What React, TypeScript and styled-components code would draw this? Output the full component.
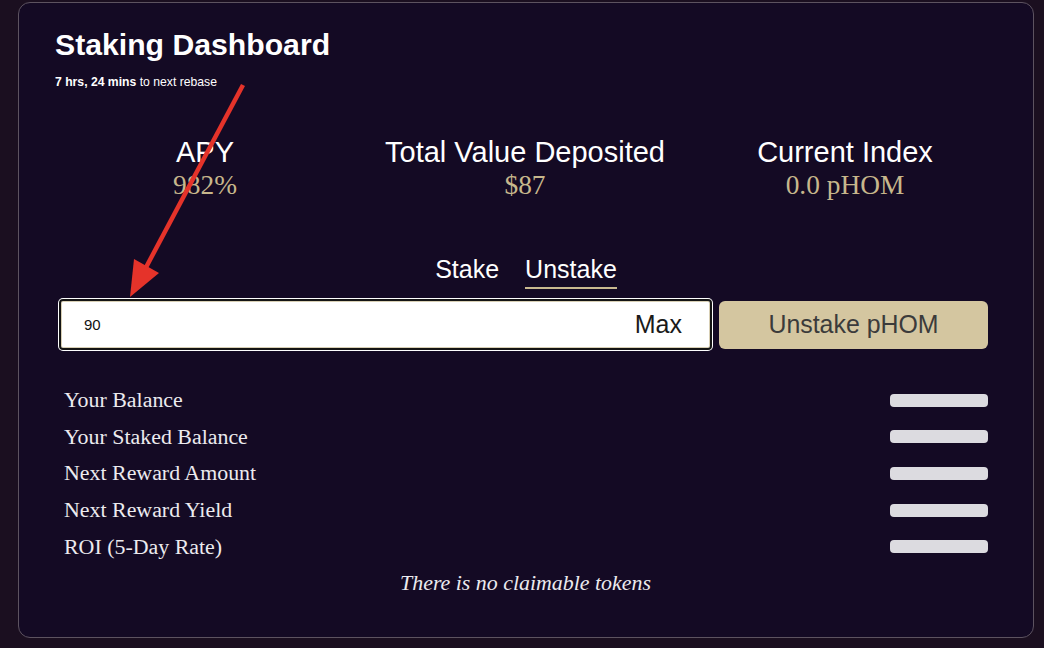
import React from "react";
import styled, { createGlobalStyle } from "styled-components";

const Global = createGlobalStyle`
  html, body { margin: 0; padding: 0; background: #1b0f20; }
  body {
    width: 1044px;
    height: 648px;
    overflow: hidden;
    font-family: "Liberation Sans", Arial, sans-serif;
  }
`;

const Page = styled.div`
  position: relative;
  box-sizing: border-box;
  width: 1044px;
  height: 648px;
  padding: 2px 0 0 18px;
`;

const Card = styled.section`
  box-sizing: border-box;
  width: 1016px;
  height: 636px;
  border: 1px solid #5d5360;
  border-radius: 12px;
  background: #140a24;
  padding: 25px 45px 0 39px;
  display: flex;
  flex-direction: column;
`;

const Header = styled.header`
  margin-left: -3px;
  display: flex;
  flex-direction: column;
  gap: 13px;
`;

const Title = styled.h1`
  margin: 0;
  font-size: 30.2px;
  line-height: 34px;
  font-weight: 700;
  color: #ffffff;
`;

const Rebase = styled.p`
  margin: 0;
  font-size: 12.2px;
  line-height: 14px;
  color: #ffffff;
  b { font-weight: 700; }
`;

const Metrics = styled.div`
  margin: 47px -17px 0 -13px;
  display: grid;
  grid-template-columns: repeat(3, 1fr);
`;

const Metric = styled.div`
  display: flex;
  flex-direction: column;
  align-items: center;
`;

const MetricLabel = styled.div`
  font-size: 29px;
  line-height: 33px;
  color: #ffffff;
`;

const MetricValue = styled.div`
  font-family: "Liberation Serif", "Times New Roman", serif;
  font-size: 27.4px;
  line-height: 33px;
  color: #c7b78c;
`;

const Tabs = styled.nav`
  margin: 53px 0 0 6px;
  display: flex;
  justify-content: center;
  gap: 26px;
`;

const Tab = styled.span<{ $active?: boolean }>`
  font-size: 25px;
  line-height: 28px;
  color: #ffffff;
  padding-bottom: 4px;
  border-bottom: 2px solid ${(p) => (p.$active ? "#c9b98f" : "transparent")};
`;

const ActionRow = styled.div`
  margin-top: 10px;
  display: flex;
  align-items: center;
  gap: 7px;
`;

const InputBox = styled.label`
  box-sizing: border-box;
  flex: 0 0 653px;
  margin-left: 1px;
  height: 51px;
  display: flex;
  align-items: center;
  justify-content: space-between;
  padding: 0 28px 0 23px;
  background: #ffffff;
  border: 2px solid #141414;
  border-radius: 4px;
  box-shadow: 0 0 0 1px #ffffff, inset 0 0 0 1px #d8cfb4;
`;

const Amount = styled.span`
  font-size: 15px;
  color: #111111;
`;

const Max = styled.span`
  font-size: 25px;
  color: #1a1a1a;
`;

const UnstakeButton = styled.button`
  box-sizing: border-box;
  flex: 1;
  height: 48px;
  border: none;
  border-radius: 6px;
  background: #d4c6a0;
  color: #3b3b3b;
  font-family: "Liberation Sans", Arial, sans-serif;
  font-size: 24.9px;
  padding: 0;
`;

const Rows = styled.div`
  margin-top: 32px;
  padding-left: 6px;
  display: grid;
  grid-auto-rows: 36.6px;
`;

const Row = styled.div`
  display: flex;
  align-items: center;
  justify-content: space-between;
`;

const RowLabel = styled.span`
  font-family: "Liberation Serif", "Times New Roman", serif;
  font-size: 21.9px;
  color: #ecebef;
`;

const Skeleton = styled.span`
  width: 98px;
  height: 13px;
  border-radius: 4px;
  background: #dcdbe0;
`;

const Note = styled.p`
  margin: 5px 0 0 5px;
  text-align: center;
  font-family: "Liberation Serif", "Times New Roman", serif;
  font-style: italic;
  font-size: 21.9px;
  line-height: 26px;
  color: #ecebef;
`;

const Annotation = styled.svg`
  position: absolute;
  left: 0;
  top: 0;
  pointer-events: none;
`;

const metrics = [
  { label: "APY", value: "982%" },
  { label: "Total Value Deposited", value: "$87" },
  { label: "Current Index", value: "0.0 pHOM" },
];

const rows = [
  "Your Balance",
  "Your Staked Balance",
  "Next Reward Amount",
  "Next Reward Yield",
  "ROI (5-Day Rate)",
];

export default function App() {
  return (
    <>
      <Global />
      <Page>
        <Card>
          <Header>
            <Title>Staking Dashboard</Title>
            <Rebase>
              <b>7 hrs, 24 mins</b> to next rebase
            </Rebase>
          </Header>
          <Metrics>
            {metrics.map((m) => (
              <Metric key={m.label}>
                <MetricLabel>{m.label}</MetricLabel>
                <MetricValue>{m.value}</MetricValue>
              </Metric>
            ))}
          </Metrics>
          <Tabs>
            <Tab>Stake</Tab>
            <Tab $active>Unstake</Tab>
          </Tabs>
          <ActionRow>
            <InputBox>
              <Amount>90</Amount>
              <Max>Max</Max>
            </InputBox>
            <UnstakeButton>Unstake pHOM</UnstakeButton>
          </ActionRow>
          <Rows>
            {rows.map((r) => (
              <Row key={r}>
                <RowLabel>{r}</RowLabel>
                <Skeleton />
              </Row>
            ))}
          </Rows>
          <Note>There is no claimable tokens</Note>
        </Card>
        <Annotation width="1044" height="648" viewBox="0 0 1044 648">
          <line x1="243" y1="85" x2="143" y2="273" stroke="#e5332a" strokeWidth="4.5" strokeLinecap="butt" />
          <polygon points="130,297 134,259 159,273" fill="#e5332a" />
        </Annotation>
      </Page>
    </>
  );
}
